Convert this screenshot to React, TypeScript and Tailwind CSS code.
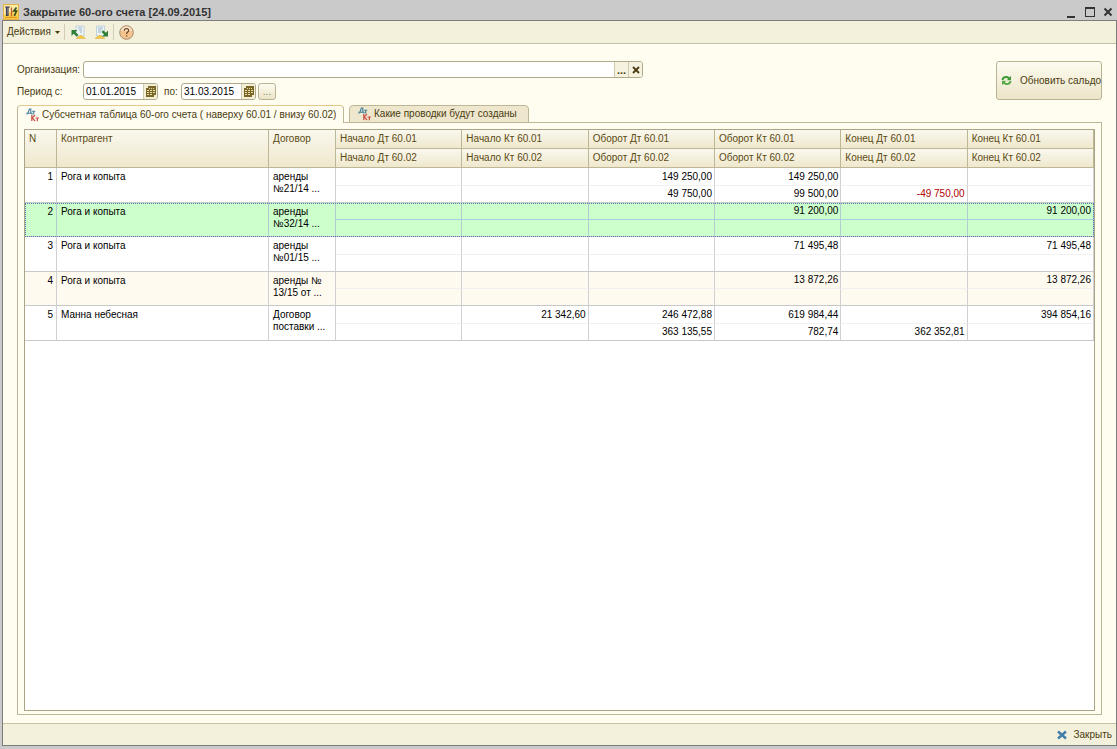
import React, { useState } from 'react';

type Pair = [string, string];

interface Entry {
  n: number;
  partner: string;
  contract: [string, string];
  cells: Pair[];
}

const entries: Entry[] = [
  {
    n: 1,
    partner: 'Рога и копыта',
    contract: ['аренды', '№21/14 ...'],
    cells: [['', ''], ['', ''], ['149 250,00', '49 750,00'], ['149 250,00', '99 500,00'], ['', '-49 750,00'], ['', '']],
  },
  {
    n: 2,
    partner: 'Рога и копыта',
    contract: ['аренды', '№32/14 ...'],
    cells: [['', ''], ['', ''], ['', ''], ['91 200,00', ''], ['', ''], ['91 200,00', '']],
  },
  {
    n: 3,
    partner: 'Рога и копыта',
    contract: ['аренды', '№01/15 ...'],
    cells: [['', ''], ['', ''], ['', ''], ['71 495,48', ''], ['', ''], ['71 495,48', '']],
  },
  {
    n: 4,
    partner: 'Рога и копыта',
    contract: ['аренды №', '13/15 от ...'],
    cells: [['', ''], ['', ''], ['', ''], ['13 872,26', ''], ['', ''], ['13 872,26', '']],
  },
  {
    n: 5,
    partner: 'Манна небесная',
    contract: ['Договор', 'поставки ...'],
    cells: [['', ''], ['21 342,60', ''], ['246 472,88', '363 135,55'], ['619 984,44', '782,74'], ['', '362 352,81'], ['394 854,16', '']],
  },
];

const groups = ['Начало Дт', 'Начало Кт', 'Оборот Дт', 'Оборот Кт', 'Конец Дт', 'Конец Кт'];

function AppIcon() {
  return (
    <svg className="shrink-0" width="16" height="16" viewBox="0 0 16 16" aria-hidden="true">
      <rect x="0.5" y="0.5" width="15" height="15" fill="#f9d34f" stroke="#e3b04a" />
      <path d="M1 1h14v4L1 11z" fill="#fdeea6" />
      <path d="M2 3h5M3.500 3v8.500h1.500V3" stroke="#3b3a63" strokeWidth="1.200" fill="none" />
      <path d="M8.500 3.500v9" stroke="#c4572f" strokeWidth="1.300" />
      <path d="M13.500 3.500L10.800 7h2.700l-2.200 5" stroke="#2f4b22" strokeWidth="1.600" fill="none" />
      <path d="M2 13.500h12" stroke="#e89a20" strokeWidth="1.400" />
    </svg>
  );
}

function SheetIcon({ out }: { out?: boolean }) {
  return (
    <svg className="shrink-0" width="15" height="15" viewBox="0 0 15 15" aria-hidden="true">
      <path d={out ? 'M2.500 1h8v10h-8z' : 'M5 1h8v10H5z'} fill="#eef5f9" stroke="#b4c8d4" strokeWidth="0.800" />
      <path d={out ? 'M4 3h5M4 5h4M4 7h3' : 'M7 3h4M8 5h3M9 7h2'} stroke="#9ab4c5" fill="none" />
      <path d={out ? 'M1 13.500L6 10l5 3.500z' : 'M5 13.500L10 10l4.500 3.500z'} fill="#f4c844" stroke="#dcae3c" strokeWidth="0.500" />
      <path
        d={out ? 'M14 11.500H8l2-2-2.500-2.500L9.300 5.200l2.500 2.500L14 5.500z' : 'M0.500 5h6l-2 2L7.500 10 5.700 11.800l-3-3L0.500 11z'}
        fill="#2f8036"
      />
    </svg>
  );
}

function HelpIcon() {
  return (
    <svg className="shrink-0" width="15" height="15" viewBox="0 0 15 15" aria-hidden="true">
      <circle cx="7.5" cy="7.5" r="6.800" fill="#f5c48e" stroke="#a58a70" />
      <path d="M2 6a5.600 5.600 0 0 1 11 0z" fill="#fbe3c4" />
      <path d="M5.300 5.800C5.300 4.200 6.300 3.700 7.500 3.700s2.200.7 2.200 1.900c0 1.500-2.100 1.500-2.100 3.300M7.600 10.200v1.400" stroke="#6b4a2c" strokeWidth="1.300" fill="none" />
    </svg>
  );
}

function CalendarIcon() {
  return (
    <svg className="shrink-0" width="10" height="11" viewBox="0 0 10 11" aria-hidden="true">
      <path d="M2 0h8v9H8v2H0V2h2z" fill="#7a6726" />
      <path d="M3 2h1v1H3zM5 2h1v1H5zM7 2h1v1H7zM1 4h2v1H1zM4 4h2v1H4zM7 4h2v1H7zM1 6h2v1H1zM4 6h2v1H4zM7 6h2v1H7zM1 8h2v1H1zM4 8h2v1H4z" fill="#e6dcae" />
    </svg>
  );
}

function DebitCreditIcon() {
  return (
    <svg className="shrink-0" width="14" height="14" viewBox="0 0 14 14" fill="none" aria-hidden="true">
      <path d="M1 6.500V5.200h5v1.300M1.900 5.200L3.400 1h1.400v4.200M6.200 3.200h3M7.700 3.200v3.300" stroke="#3f7d9c" strokeWidth="1.100" />
      <path d="M5.800 7v6M9 7L6.300 9.800 9 13M9.500 10h3.500M11.300 10v3.200" stroke="#c94f45" strokeWidth="1.200" />
    </svg>
  );
}

function RefreshIcon() {
  return (
    <svg className="shrink-0" width="11" height="11" viewBox="0 0 11 11" aria-hidden="true">
      <path d="M0.500 5C0.800 2.200 2.500 1 5 1c1.500 0 2.500.5 3.300 1.300L10 1v4.300H5.800l1.300-1.500C5.500 2.300 3 2.800 2.500 5z" fill="#3f9b3a" />
      <path d="M10.500 6c-.3 2.800-2 4-4.500 4-1.500 0-2.500-.5-3.300-1.300L1 10V5.700h4.200L3.900 7.200C5.500 8.700 8 8.200 8.500 6z" fill="#57aa48" />
    </svg>
  );
}

const face = 'border border-[#b9b396] bg-linear-to-b from-[#fdfbf0] to-[#ece5c8]';

function DateField({ id, value }: { id: string; value: string }) {
  return (
    <div className="flex h-[17px] w-[75px] overflow-hidden rounded-[3px] border border-[#b0aa8c] bg-white">
      <input id={id} defaultValue={value} className="min-w-0 flex-1 pl-0.5 leading-[15px] text-black outline-none" />
      <button type="button" aria-label="Календарь" className="flex w-[14px] items-center justify-center border-l border-[#cfc9ad] bg-[#f3eed6]">
        <CalendarIcon />
      </button>
    </div>
  );
}

function EntryRows({ entry, selected, onSelect }: { entry: Entry; selected: boolean; onSelect: () => void }) {
  const even = entry.n % 2 === 0;
  const bg = selected ? 'bg-[#ccffcc]' : even ? 'bg-[#fffaf0]' : 'bg-white';
  const edge = 'border-b border-b-[#c8c8c8]';
  const dots = selected ? 'outline-1 -outline-offset-1 outline-dotted outline-[#4f78b0]' : '';
  const side = selected ? 'border-r border-r-[#b4ccd0]' : 'border-r border-r-[#cfcfd4]';
  const split = selected ? 'border-b border-b-[#a9cde0]' : 'border-b border-b-[#f0f0f0]';
  return (
    <tbody onClick={onSelect} className={`${bg} ${dots}`}>
      {[0, 1].map((line) => (
        <tr key={line} className={!even && line === 0 ? 'h-[18px]' : 'h-[17px]'}>
          {line === 0 && (
            <>
              <td rowSpan={2} className={`${edge} ${side} pt-[3px] pr-[3px] text-right align-top`}>{entry.n}</td>
              <td rowSpan={2} className={`${edge} ${side} pt-[3px] pl-1 align-top`}>{entry.partner}</td>
              <td rowSpan={2} className={`${edge} ${side} pt-[3px] pl-1 align-top whitespace-nowrap`}>
                {entry.contract[0]}
                <br />
                {entry.contract[1]}
              </td>
            </>
          )}
          {entry.cells.map((pair, i) => (
            <td key={i} className={`${line === 0 ? split : edge} ${side} pr-0.5 text-right align-middle ${pair[line].startsWith('-') ? 'text-[#b00000]' : ''}`}>
              {pair[line]}
            </td>
          ))}
        </tr>
      ))}
    </tbody>
  );
}

const th = 'border-r border-b border-[#bdb798] bg-linear-to-b from-[#faf8ee] to-[#efe8cd] pl-1 text-left font-normal';

export default function App() {
  const [selected, setSelected] = useState(2);
  return (
    <div className="flex h-screen min-h-80 flex-col bg-[#cacaca] pb-[3px] pl-0.5 font-['Liberation_Sans',Arial,sans-serif] text-[10px] leading-3 text-[#4a3c10]">
      <header className="flex h-5 shrink-0 items-center gap-1 pt-1 pr-1 pl-px text-[#333333]">
        <AppIcon />
        <h1 className="flex-1 text-[11px] font-bold">Закрытие 60-ого счета [24.09.2015]</h1>
        <div className="flex items-center gap-2">
          <button type="button" aria-label="Свернуть" className="flex h-3 w-2.5 items-end">
            <span className="block h-0.5 w-2 bg-[#333333]" />
          </button>
          <button type="button" aria-label="Развернуть" className="h-2.5 w-2.5 border border-t-2 border-[#333333]" />
          <button type="button" aria-label="Закрыть окно">
            <svg width="10" height="10" viewBox="0 0 10 10">
              <path d="M1.500 1.500l7 7M8.500 1.500l-7 7" stroke="#333333" strokeWidth="2" />
            </svg>
          </button>
        </div>
      </header>

      <div className="flex min-h-0 flex-1 flex-col border border-[#7d7d7d] bg-[#fffcf0]">
        <nav className="flex h-[23px] shrink-0 items-center border-b border-[#c6c0a4] bg-[#f3f0dc] pl-1">
          <button type="button" className="flex items-center gap-1">
            Действия
            <svg width="5" height="3" viewBox="0 0 5 3"><path d="M0 0h5L2.500 3z" fill="#4a3c10" /></svg>
          </button>
          <span className="mx-1 h-4 w-px bg-[#d3cdb4]" />
          <div className="flex gap-2 pl-0.5">
            <button type="button" aria-label="Загрузить"><SheetIcon /></button>
            <button type="button" aria-label="Выгрузить"><SheetIcon out /></button>
          </div>
          <span className="mx-1 h-4 w-px bg-[#d3cdb4]" />
          <button type="button" aria-label="Справка" className="pl-px"><HelpIcon /></button>
        </nav>

        <main className="flex min-h-0 flex-1 flex-col px-3.5 pt-[17px] pb-2">
          <div className="flex shrink-0 items-start justify-between">
            <div className="flex flex-col gap-[5px]">
              <div className="flex items-center">
                <label htmlFor="org" className="w-[66px] whitespace-nowrap">Организация:</label>
                <div className="flex h-[17px] w-[560px] overflow-hidden rounded-[3px] border border-[#b0aa8c] bg-white">
                  <input id="org" className="min-w-0 flex-1 px-0.5 text-black outline-none" />
                  <button type="button" aria-label="Выбрать" className="w-3.5 border-l border-[#cfc9ad] bg-[#f6f2e0] text-[11px] font-bold">...</button>
                  <button type="button" aria-label="Очистить" className="flex w-3.5 items-center justify-center border-l border-[#cfc9ad] bg-[#f6f2e0]">
                    <svg width="8" height="8" viewBox="0 0 8 8"><path d="M1 1l6 6M7 1L1 7" stroke="#4a3c10" strokeWidth="1.800" /></svg>
                  </button>
                </div>
              </div>
              <div className="flex items-center">
                <label htmlFor="from" className="w-[66px]">Период с:</label>
                <DateField id="from" value="01.01.2015" />
                <label htmlFor="to" className="w-[23px] pl-1.5">по:</label>
                <DateField id="to" value="31.03.2015" />
                <button type="button" aria-label="Выбрать период" className={`${face} ml-0.5 h-[17px] w-[18px] rounded-[3px] text-[#8a8060]`}>...</button>
              </div>
            </div>
            <button type="button" className={`${face} flex h-[39px] w-[106px] items-center gap-2 rounded-[3px] pl-1 whitespace-nowrap`}>
              <RefreshIcon />
              Обновить сальдо
            </button>
          </div>

          <div role="tablist" className="z-10 -mb-px mt-[5px] flex h-[18px] shrink-0 items-end gap-[5px]">
            <button type="button" role="tab" aria-selected="true" className="flex h-[18px] w-[327px] items-center gap-0.5 rounded-t-[4px] border border-b-0 border-[#bdb798] border-t-[#e5c98c] bg-[#fffcf0] pl-2 whitespace-nowrap">
              <DebitCreditIcon />
              Субсчетная таблица 60-ого счета ( наверху 60.01 / внизу 60.02)
            </button>
            <button type="button" role="tab" aria-selected="false" className="flex h-[18px] w-[180px] items-center gap-0.5 rounded-t-[4px] border border-[#bdb798] bg-[#eee7cd] pl-2 whitespace-nowrap">
              <DebitCreditIcon />
              Какие проводки будут созданы
            </button>
          </div>

          <section role="tabpanel" className="flex min-h-0 flex-1 flex-col border border-[#bdb798] px-1.5 pt-1.5 pb-[3px]">
            <div className="min-h-0 flex-1 overflow-hidden border border-[#aaa586] bg-white">
              <table className="w-full table-fixed border-separate border-spacing-0 text-black">
                <colgroup>
                  <col className="w-8" />
                  <col className="w-[212px]" />
                  <col className="w-[67px]" />
                  {groups.map((g) => <col key={g} />)}
                </colgroup>
                <thead className="text-[#5a4a12]">
                  <tr className="h-[19px]">
                    <th rowSpan={2} className={`${th} pt-[3px] align-top`}>N</th>
                    <th rowSpan={2} className={`${th} pt-[3px] align-top`}>Контрагент</th>
                    <th rowSpan={2} className={`${th} pt-[3px] align-top`}>Договор</th>
                    {groups.map((g) => <th key={g} className={th}>{g} 60.01</th>)}
                  </tr>
                  <tr className="h-[19px]">
                    {groups.map((g) => <th key={g} className={th}>{g} 60.02</th>)}
                  </tr>
                </thead>
                {entries.map((e) => (
                  <EntryRows key={e.n} entry={e} selected={selected === e.n} onSelect={() => setSelected(e.n)} />
                ))}
              </table>
            </div>
          </section>
        </main>

        <footer className="flex h-[22px] shrink-0 items-center justify-end border-t border-[#c6c0a4] bg-[#f3f0dc] pr-1">
          <button type="button" className="flex items-center gap-1.5">
            <svg width="10" height="10" viewBox="0 0 10 10"><path d="M1 1.500l8 7M9 1.500l-8 7" stroke="#3f7ca8" strokeWidth="2.400" /></svg>
            Закрыть
          </button>
        </footer>
      </div>
    </div>
  );
}
